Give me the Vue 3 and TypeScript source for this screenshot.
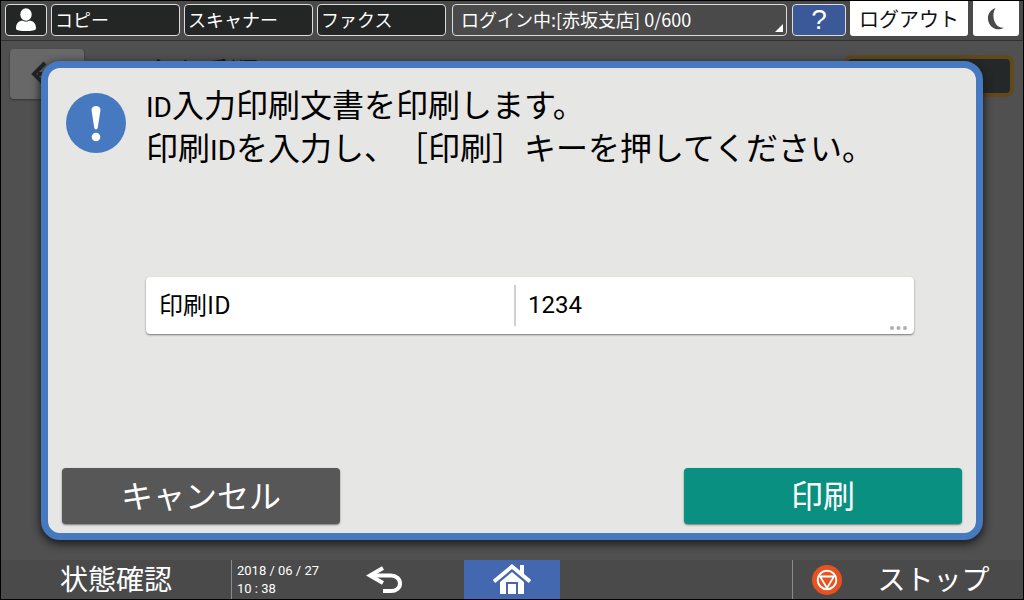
<script setup lang="ts">
import { ref } from 'vue'

const functions = ['コピー', 'スキャナー', 'ファクス']
const printId = ref('1234')
</script>

<template>
  <div class="panel">
    <header class="topbar">
      <button class="key user" type="button" aria-label="ユーザー">
        <svg width="22" height="24" viewBox="0 0 22 24" fill="#fff">
          <ellipse cx="11" cy="6.5" rx="5.7" ry="6.2" />
          <path d="M1 20.5C1 15 4 12.5 8 12.7Q11 14.5 14 12.7C18 12.5 21 15 21 20.5C21 22.5 16 23 11 23S1 22.5 1 20.5Z" />
        </svg>
      </button>
      <button v-for="name in functions" :key="name" class="key function" type="button">{{ name }}</button>
      <button class="key login" type="button">
        <span>ログイン中:[赤坂支店] 0/600</span>
        <svg class="corner" width="8" height="8" viewBox="0 0 8 8"><path d="M8 0V8H0Z" fill="#fff" /></svg>
      </button>
      <button class="key help" type="button">?</button>
      <button class="light logout" type="button">ログアウト</button>
      <button class="light sleep" type="button" aria-label="スリープ">
        <svg width="18" height="24" viewBox="0 0 18 24"><path d="M8.500 1C1.500 3.500 -.8 10.500 2.200 16.500C5 22 11.500 24 16.800 20.800C8 21.500 3.500 9.500 8.500 1Z" fill="#4a4a4a" /></svg>
      </button>
    </header>

    <main class="workspace">
      <div class="behind">
        <button class="back" type="button" aria-label="戻る" disabled>
          <svg width="26" height="26" viewBox="0 0 26 26" fill="none" stroke="#222424" stroke-width="4"><path d="M14 2L3 13L14 24M7 13H26" /></svg>
        </button>
        <span class="behind-title">主な手順</span>
        <span class="behind-box"></span>
      </div>

      <form class="dialog" role="dialog" aria-labelledby="message" @submit.prevent>
        <div class="notice">
          <svg class="alert" width="60" height="60" viewBox="0 0 60 60">
            <circle cx="30" cy="30" r="30" fill="#4679bf" />
            <path d="M25.500 17C25.500 11.500 34.500 11.500 34.500 17L31.800 34.500C31.400 37 28.600 37 28.200 34.500Z" fill="#fff" />
            <circle cx="30" cy="44" r="4.300" fill="#fff" />
          </svg>
          <p id="message" class="message"><span class="latin">ID</span>入力印刷文書を印刷します。<br />印刷<span class="latin">ID</span>を入力し、［印刷］キーを押してください。</p>
        </div>
        <div class="field">
          <label for="print-id">印刷ID</label>
          <input id="print-id" v-model="printId" type="text" />
          <svg class="more" width="18" height="4" viewBox="0 0 18 4" fill="#b0b0b0"><circle cx="2" cy="2" r="2" /><circle cx="8.500" cy="2" r="2" /><circle cx="15" cy="2" r="2" /></svg>
        </div>
        <div class="actions">
          <button class="action cancel" type="button">キャンセル</button>
          <button class="action print" type="submit">印刷</button>
        </div>
      </form>
    </main>

    <footer class="bottombar">
      <button class="plain status" type="button">状態確認</button>
      <time class="clock" datetime="2018-06-27T10:38">2018 / 06 / 27<br />10 : 38</time>
      <button class="plain undo" type="button" aria-label="戻る">
        <svg width="38" height="30" viewBox="0 0 38 30" fill="none" stroke="#fff" stroke-width="4"><path d="M4 10.500H25C30 10.500 34 14 34 18.500C34 23 30 26 25 26H17" /><path d="M17 3L4 10.500L17 18" stroke-width="4" /></svg>
      </button>
      <button class="plain home" type="button" aria-label="ホーム">
        <svg width="38" height="31" viewBox="0 0 38 31">
          <path d="M1 17.500L19 2.500L37 17.500" fill="none" stroke="#fff" stroke-width="3.800" />
          <path d="M27 1H31V11L27 8Z" fill="#fff" />
          <path d="M7 18L19 8L31 18V30H25V18H13V30H7Z" fill="#fff" />
          <path d="M15 20H23V30H15Z" fill="#fff" />
        </svg>
      </button>
      <button class="plain stop" type="button">
        <svg width="30" height="30" viewBox="0 0 30 30">
          <circle cx="15" cy="15" r="15" fill="#e85220" />
          <circle cx="15" cy="15" r="9.300" fill="none" stroke="#fff" stroke-width="2" />
          <path d="M8 11.500H22L15 23Z" fill="none" stroke="#fff" stroke-width="1.800" />
        </svg>
        <span>ストップ</span>
      </button>
    </footer>
  </div>
</template>

<style>
body {
  margin: 0;
  background: #000;
}
</style>

<style scoped>
.panel {
  box-sizing: border-box;
  min-height: 100vh;
  padding: 1px;
  display: flex;
  flex-direction: column;
  background: #505050;
  box-shadow: inset 0 0 0 1px #000;
  color: #fff;
  font-family: "Noto Sans CJK JP", sans-serif;
}
button,
input {
  box-sizing: border-box;
  margin: 0;
  padding: 0;
  border: 0;
  color: inherit;
  font-family: inherit;
}
svg {
  display: block;
}
.topbar {
  box-sizing: border-box;
  height: 40px;
  padding: 0 4px 4px;
  display: flex;
  align-items: flex-end;
  gap: 4px;
  background: #4a4a4a;
  border-bottom: 1px solid #303030;
}
.key {
  height: 32px;
  border: 1px solid #dcdcdc;
  border-radius: 4px;
  background: #242626;
  font-size: 18px;
  line-height: 28px;
  text-align: left;
}
.user {
  width: 42px;
  display: flex;
  align-items: center;
  justify-content: center;
}
.function {
  width: 129px;
  padding-left: 3px;
  padding-bottom: 2px;
}
.login {
  position: relative;
  flex: 1;
  margin-left: 2px;
  padding-left: 8px;
  padding-bottom: 2px;
  background: #4a4a4a;
}
.corner {
  position: absolute;
  right: 3px;
  bottom: 3px;
}
.help {
  width: 54px;
  margin-left: 1px;
  background: #3b5899;
  font-family: "Liberation Sans", sans-serif;
  font-size: 28px;
  text-align: center;
}
.light {
  height: 35px;
  border-radius: 0 0 3px 3px;
  background: #fff;
  color: #111;
  font-size: 20px;
  line-height: 32px;
}
.logout {
  width: 118px;
}
.sleep {
  width: 46px;
  margin-left: 1px;
  display: flex;
  align-items: center;
  justify-content: center;
}
.workspace {
  position: relative;
  flex: 1;
  display: flex;
  padding: 20px 40px;
}
.behind {
  position: absolute;
  inset: 8px 9px auto;
  display: flex;
  align-items: flex-start;
}
.back {
  width: 74px;
  height: 50px;
  padding-left: 21px;
  border-radius: 4px;
  background: #686868;
  box-shadow: 0 1px 2px #333;
}
.behind-title {
  flex: 1;
  padding: 8px 0 0 62px;
  color: #111;
  font-size: 28px;
  line-height: 28px;
}
.behind-box {
  box-sizing: border-box;
  width: 170px;
  height: 42px;
  margin-top: 6px;
  border: 4px solid #62491c;
  border-radius: 8px;
  background: #252828;
}
.dialog {
  position: relative;
  box-sizing: border-box;
  flex: 1;
  display: flex;
  flex-direction: column;
  justify-content: space-between;
  padding: 14px 14px 9px;
  border: 7px solid #4679bf;
  border-radius: 19px;
  background: #e6e6e4;
  box-shadow: 0 3px 9px 1px #1c1c1c;
  color: #000;
}
.notice {
  display: flex;
  gap: 20px;
}
.alert {
  margin: 11px 0 0 4px;
}
.message {
  margin: 0;
  font-size: 32px;
  line-height: 43px;
  text-spacing-trim: space-all;
  white-space: nowrap;
}
.latin {
  font-family: Roboto, sans-serif;
  font-size: 28px;
  line-height: 1;
}
.field {
  position: relative;
  display: grid;
  grid-template-columns: 368px 1fr;
  align-items: center;
  height: 57px;
  margin: 0 48px 26px 84px;
  border-radius: 4px;
  background: #fff;
  box-shadow: 0 1px 2px #777;
  font-size: 24px;
}
.field label {
  padding: 0 0 4px 13px;
}
.field input {
  height: 41px;
  min-width: 0;
  padding-left: 12px;
  border-left: 2px solid #d0d0d0;
  background: transparent;
  font-family: Roboto, sans-serif;
  font-size: 24px;
  outline: 0;
}
.more {
  position: absolute;
  right: 6px;
  bottom: 4px;
}
.actions {
  display: flex;
  justify-content: space-between;
}
.action {
  width: 278px;
  height: 56px;
  padding-bottom: 4px;
  border-radius: 4px;
  box-shadow: 0 1px 2px #777;
  color: #fff;
  font-size: 32px;
}
.cancel {
  background: #575757;
}
.print {
  background: #0a9080;
}
.bottombar {
  height: 39px;
  display: flex;
  background: #4a4a4a;
}
.plain {
  display: flex;
  align-items: center;
  justify-content: center;
  background: transparent;
  font-size: 28px;
  line-height: 32px;
}
.status {
  width: 230px;
  padding-bottom: 4px;
}
.clock {
  box-sizing: border-box;
  width: 126px;
  padding: 2px 0 0 5px;
  border-left: 1px solid #8a8a8a;
  font-family: Roboto, sans-serif;
  font-size: 13px;
  line-height: 18px;
}
.undo {
  width: 56px;
}
.home {
  width: 96px;
  margin-left: 51px;
  background: #4368b0;
}
.stop {
  width: 231px;
  margin-left: auto;
  padding-right: 14px;
  gap: 35px;
  border-left: 1px solid #8a8a8a;
}
.stop span {
  padding-bottom: 4px;
}
</style>
